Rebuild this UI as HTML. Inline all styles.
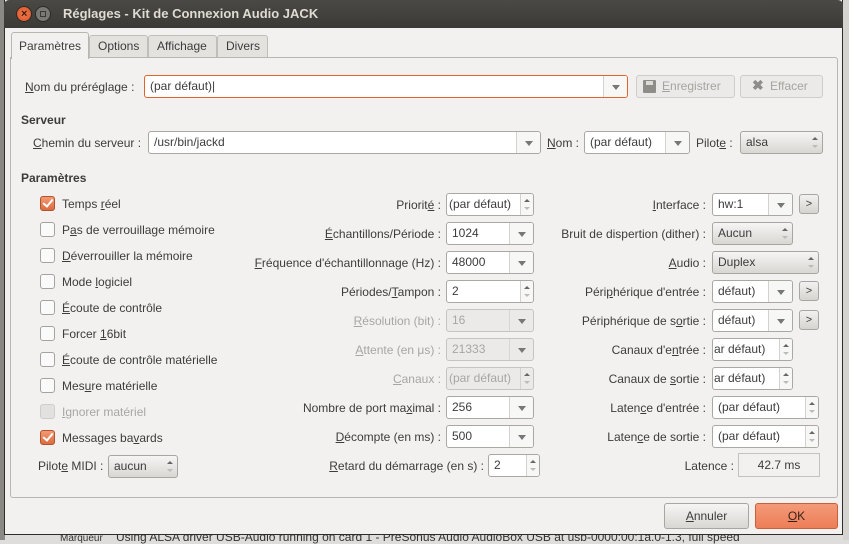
<!DOCTYPE html>
<html><head><meta charset="utf-8"><style>
body{margin:0;width:849px;height:540px;overflow:hidden;background:#dedddb;font-family:"Liberation Sans",sans-serif;font-size:12px;color:#3c3c3c;position:relative}
div{box-sizing:border-box}
.a{position:absolute;white-space:nowrap}
.l{position:absolute;white-space:nowrap;line-height:16px}
.f{position:absolute;background:#fff;border:1px solid #aaa8a3;border-radius:3px;height:23px;line-height:21px;padding-left:5px;overflow:hidden;white-space:nowrap}
.f.d{background:#ebeae8;color:#a8a6a2;border-color:#c6c4c0}
.ar{position:absolute;right:0;top:0;bottom:0;width:24px;border-left:1px solid #d4d2ce;background:#f7f7f6}
.ar:after{content:"";position:absolute;left:8px;top:9px;border-left:4px solid transparent;border-right:4px solid transparent;border-top:5px solid #777}
.sp{position:absolute;right:0;top:0;bottom:0;width:13px;border-left:1px solid #d4d2ce;background:#f7f7f6}
.sp:before{content:"";position:absolute;left:3px;top:5px;border-left:3px solid transparent;border-right:3px solid transparent;border-bottom:3px solid #666}
.sp:after{content:"";position:absolute;left:3px;bottom:5px;border-left:3px solid transparent;border-right:3px solid transparent;border-top:3px solid #bbb}
.b{position:absolute;border:1px solid #a8a6a1;border-radius:3px;background:linear-gradient(#f6f5f4,#d9d7d3);height:23px;line-height:21px;padding-left:5px;white-space:nowrap}
.b .sp{background:none;border:none}
.ck{position:absolute;left:40px;width:15px;height:15px;border:1px solid #a5a39f;border-radius:3px;background:#fafafa}
.ck.on{background:linear-gradient(#f29a72,#dd6b3f);border-color:#b0532e}
.ck.on:after{content:"";position:absolute;left:4px;top:0px;width:4px;height:8px;border-right:2px solid #fff;border-bottom:2px solid #fff;transform:rotate(40deg)}
.ck.dis{background:#e2e1df;border-color:#cfcdc9}
.cl{position:absolute;left:62px;line-height:16px}
u{text-decoration:underline}
.gt{position:absolute;width:20px;height:20px;border:1px solid #a8a6a1;border-radius:3px;background:linear-gradient(#f2f1ef,#d6d4d0);text-align:center;line-height:18px;font-size:11px}
</style></head><body>
<!-- background app bits -->
<div class="a" style="left:60px;top:533px;font-size:10px;color:#333">Marqueur</div>
<div class="a" style="left:116px;top:530px;font-size:12px;color:#333">Using ALSA driver USB-Audio running on card 1 - PreSonus Audio AudioBox USB at usb-0000:00:1a.0-1.3, full speed</div>
<div class="a" style="left:0;top:0;width:5px;height:540px;background:#8a8985"></div>
<!-- window -->
<div class="a" style="left:4px;top:0;width:839px;height:535px;background:#f2f1f0;border:1px solid #2e2d2a;border-top:none"></div>
<div class="a" style="left:4px;top:0;width:839px;height:28px;background:linear-gradient(#4a4945,#3b3a36);border-radius:5px 5px 0 0"></div>
<div class="a" style="left:16px;top:6px;width:16px;height:16px;border-radius:8px;background:radial-gradient(#f47a4a,#d8542a);border:1px solid #2b2a27"></div>
<div class="a" style="left:21px;top:8px;color:#3a1a10;font-size:11px;font-weight:bold">×</div>
<div class="a" style="left:35px;top:6px;width:16px;height:16px;border-radius:8px;background:#7a7973;border:1px solid #2b2a27"></div>
<div class="a" style="left:40px;top:11px;width:6px;height:6px;border:1px solid #3a3935"></div>
<div class="a" style="left:63px;top:6px;color:#dfdbd2;font-weight:bold;font-size:13px">Réglages - Kit de Connexion Audio JACK</div>
<!-- tabs -->
<div class="a" style="left:10px;top:57px;width:828px;height:441px;border:1px solid #b8b6b1;border-radius:0 3px 3px 3px;background:#f2f1f0"></div>
<div class="a" style="left:11px;top:32px;width:78px;height:27px;background:#f2f1f0;border:1px solid #b8b6b1;border-bottom:none;border-radius:3px 3px 0 0;padding:6px 0 0 7px">Paramètres</div>
<div class="a" style="left:89px;top:35px;width:59px;height:22px;background:#e4e2df;border:1px solid #c0beb9;border-bottom:none;border-radius:3px 3px 0 0;padding:3px 0 0 8px">Options</div>
<div class="a" style="left:148px;top:35px;width:69px;height:22px;background:#e4e2df;border:1px solid #c0beb9;border-bottom:none;border-radius:3px 3px 0 0;padding:3px 0 0 8px">Affichage</div>
<div class="a" style="left:217px;top:35px;width:51px;height:22px;background:#e4e2df;border:1px solid #c0beb9;border-bottom:none;border-radius:3px 3px 0 0;padding:3px 0 0 8px">Divers</div>
<!-- row 1 -->
<div class="l" style="left:25px;top:79px"><u>N</u>om du préréglage :</div>
<div class="f" style="left:144px;top:75px;width:484px;border-color:#e0622f">(par défaut)|<div class="ar"></div></div>
<div class="b" style="left:636px;top:75px;width:99px;color:#a6a49f;padding-left:25px;border-color:#cfcdc9;background:#ebeae8"><u>E</u>nregistrer</div>
<div class="a" style="left:643px;top:80px;width:13px;height:13px;background:#8e8d8a;border-radius:1px"></div>
<div class="a" style="left:646px;top:81px;width:7px;height:4px;background:#dcdbd8"></div>
<div class="b" style="left:740px;top:75px;width:83px;color:#a6a49f;padding-left:29px;border-color:#cfcdc9;background:#ebeae8">Effacer</div>
<div class="a" style="left:752px;top:77px;color:#8e8d8a;font-size:14px;font-weight:bold">✖</div>
<!-- serveur -->
<div class="l" style="left:21px;top:112px;font-weight:bold">Serveur</div>
<div class="l" style="left:33px;top:135px"><u>C</u>hemin du serveur :</div>
<div class="f" style="left:148px;top:131px;width:393px">/usr/bin/jackd<div class="ar"></div></div>
<div class="l" style="left:547px;top:135px"><u>N</u>om :</div>
<div class="f" style="left:584px;top:131px;width:106px">(par défaut)<div class="ar"></div></div>
<div class="l" style="left:696px;top:135px">Pilot<u>e</u> :</div>
<div class="b" style="left:740px;top:131px;width:83px">alsa<div class="sp"></div></div>
<div class="l" style="left:21px;top:170px;font-weight:bold">Paramètres</div>
<!-- checkboxes -->
<div class="ck on" style="top:196px"></div><div class="cl" style="top:196px">Temps <u>r</u>éel</div>
<div class="ck" style="top:222px"></div><div class="cl" style="top:222px">P<u>a</u>s de verrouillage mémoire</div>
<div class="ck" style="top:248px"></div><div class="cl" style="top:248px"><u>D</u>éverrouiller la mémoire</div>
<div class="ck" style="top:274px"></div><div class="cl" style="top:274px">Mode <u>l</u>ogiciel</div>
<div class="ck" style="top:300px"></div><div class="cl" style="top:300px"><u>É</u>coute de contrôle</div>
<div class="ck" style="top:326px"></div><div class="cl" style="top:326px">Forcer <u>1</u>6bit</div>
<div class="ck" style="top:352px"></div><div class="cl" style="top:352px"><u>É</u>coute de contrôle matérielle</div>
<div class="ck" style="top:378px"></div><div class="cl" style="top:378px">Mes<u>u</u>re matérielle</div>
<div class="ck dis" style="top:404px"></div><div class="cl" style="top:404px;color:#a8a6a2"><u>I</u>gnorer matériel</div>
<div class="ck on" style="top:430px"></div><div class="cl" style="top:430px">Messages ba<u>v</u>ards</div>
<div class="l" style="left:38px;top:458px">Pilot<u>e</u> MIDI :</div>
<div class="b" style="left:108px;top:455px;width:70px">aucun<div class="sp"></div></div>
<!-- middle column -->
<div class="l" style="right:408px;top:197px">Priorit<u>é</u> :</div>
<div class="f" style="left:446px;top:193px;width:88px;padding-left:2px">(par défaut)<div class="sp"></div></div>
<div class="l" style="right:408px;top:226px"><u>É</u>chantillons/Période :</div>
<div class="f" style="left:446px;top:222px;width:88px">1024<div class="ar"></div></div>
<div class="l" style="right:408px;top:255px"><u>F</u>réquence d'échantillonnage (Hz) :</div>
<div class="f" style="left:446px;top:251px;width:88px">48000<div class="ar"></div></div>
<div class="l" style="right:408px;top:284px">Périodes/<u>T</u>ampon :</div>
<div class="f" style="left:446px;top:280px;width:88px">2<div class="sp"></div></div>
<div class="l" style="right:408px;top:313px;color:#a8a6a2"><u>R</u>ésolution (bit) :</div>
<div class="f d" style="left:446px;top:309px;width:88px">16<div class="ar" style="background:none;border-color:#d8d6d2"></div></div>
<div class="l" style="right:408px;top:342px;color:#a8a6a2"><u>A</u>ttente (en μs) :</div>
<div class="f d" style="left:446px;top:338px;width:88px">21333<div class="ar" style="background:none;border-color:#d8d6d2"></div></div>
<div class="l" style="right:408px;top:371px;color:#a8a6a2"><u>C</u>anaux :</div>
<div class="f d" style="left:446px;top:367px;width:88px;padding-left:2px">(par défaut)<div class="sp" style="background:none"></div></div>
<div class="l" style="right:408px;top:400px">Nombre de port ma<u>x</u>imal :</div>
<div class="f" style="left:446px;top:396px;width:88px">256<div class="ar"></div></div>
<div class="l" style="right:408px;top:429px"><u>D</u>écompte (en ms) :</div>
<div class="f" style="left:446px;top:425px;width:88px">500<div class="ar"></div></div>
<div class="l" style="right:365px;top:458px"><u>R</u>etard du démarrage (en s) :</div>
<div class="f" style="left:488px;top:454px;width:52px">2<div class="sp"></div></div>
<!-- right column -->
<div class="l" style="right:143px;top:197px"><u>I</u>nterface :</div>
<div class="f" style="left:712px;top:193px;width:81px">hw:1<div class="ar"></div></div>
<div class="gt" style="left:799px;top:194px">&gt;</div>
<div class="l" style="right:143px;top:226px">Bruit de dispertion (dither) :</div>
<div class="b" style="left:712px;top:222px;width:81px">Aucun<div class="sp"></div></div>
<div class="l" style="right:143px;top:255px"><u>A</u>udio :</div>
<div class="b" style="left:712px;top:251px;width:107px">Duplex<div class="sp"></div></div>
<div class="l" style="right:143px;top:284px">Péri<u>p</u>hérique d'entrée :</div>
<div class="f" style="left:712px;top:280px;width:81px">défaut)<div class="ar"></div></div>
<div class="gt" style="left:799px;top:281px">&gt;</div>
<div class="l" style="right:143px;top:313px">Périphérique de s<u>o</u>rtie :</div>
<div class="f" style="left:712px;top:309px;width:81px">défaut)<div class="ar"></div></div>
<div class="gt" style="left:799px;top:310px">&gt;</div>
<div class="l" style="right:143px;top:342px">Canaux d'e<u>n</u>trée :</div>
<div class="f" style="left:712px;top:338px;width:81px;padding-left:1px">ar défaut)<div class="sp"></div></div>
<div class="l" style="right:143px;top:371px">Canaux de <u>s</u>ortie :</div>
<div class="f" style="left:712px;top:367px;width:81px;padding-left:1px">ar défaut)<div class="sp"></div></div>
<div class="l" style="right:143px;top:400px">Laten<u>c</u>e d'entrée :</div>
<div class="f" style="left:712px;top:396px;width:107px">(par défaut)<div class="sp"></div></div>
<div class="l" style="right:143px;top:429px">Laten<u>c</u>e de sortie :</div>
<div class="f" style="left:712px;top:425px;width:107px">(par défaut)<div class="sp"></div></div>
<div class="l" style="right:115px;top:458px">Latence :</div>
<div class="a" style="left:738px;top:453px;width:82px;height:24px;border:1px solid #c4c2be;line-height:22px;text-align:center">42.7 ms</div>
<!-- bottom buttons -->
<div class="b" style="left:664px;top:503px;width:85px;height:26px;line-height:24px;text-align:center;padding:0"><u>A</u>nnuler</div>
<div class="b" style="left:755px;top:503px;width:83px;height:26px;line-height:24px;text-align:center;padding:0;background:linear-gradient(#f49a78,#ec7e58);border-color:#c9603a;color:#3a2018"><u>O</u>K</div>
<div class="a" style="left:843px;top:0;width:6px;height:540px;background:#d4d3d0"></div>
</body></html>
